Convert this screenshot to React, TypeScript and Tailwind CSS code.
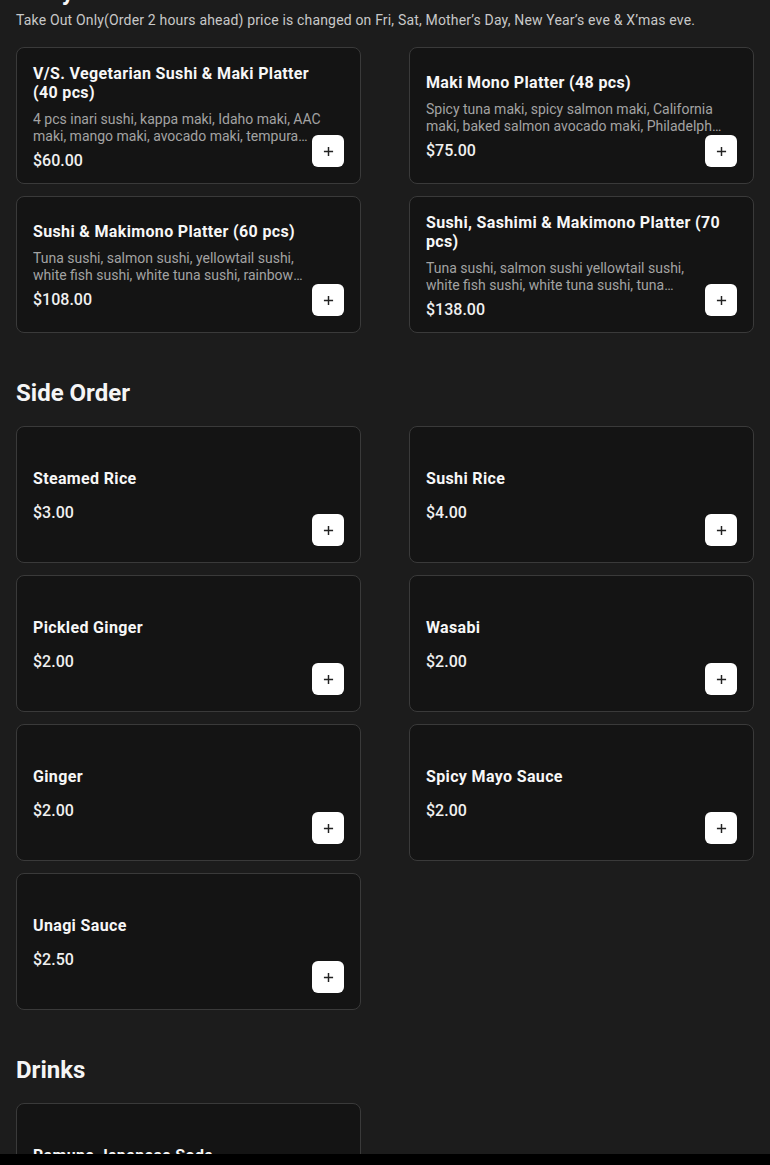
import React from "react";

type Item = { name: string; desc?: string; price: string; wide?: boolean };

const platters: Item[] = [
  {
    name: "V/S. Vegetarian Sushi & Maki Platter (40 pcs)",
    desc: "4 pcs inari sushi, kappa maki, Idaho maki, AAC maki, mango maki, avocado maki, tempura yam maki, oshinko maki",
    price: "$60.00",
  },
  {
    name: "Maki Mono Platter (48 pcs)",
    desc: "Spicy tuna maki, spicy salmon maki, California maki, baked salmon avocado maki, Philadelphia maki, dynamite maki",
    price: "$75.00",
    wide: true,
  },
  {
    name: "Sushi & Makimono Platter (60 pcs)",
    desc: "Tuna sushi, salmon sushi, yellowtail sushi, white fish sushi, white tuna sushi, rainbow maki, California maki",
    price: "$108.00",
  },
  {
    name: "Sushi, Sashimi & Makimono Platter (70 pcs)",
    desc: "Tuna sushi, salmon sushi yellowtail sushi, white fish sushi, white tuna sushi, tuna sashimi, salmon sashimi",
    price: "$138.00",
  },
];

const sides: Item[] = [
  { name: "Steamed Rice", price: "$3.00" },
  { name: "Sushi Rice", price: "$4.00" },
  { name: "Pickled Ginger", price: "$2.00" },
  { name: "Wasabi", price: "$2.00" },
  { name: "Ginger", price: "$2.00" },
  { name: "Spicy Mayo Sauce", price: "$2.00" },
  { name: "Unagi Sauce", price: "$2.50" },
];

const drinks: Item[] = [{ name: "Ramune Japanese Soda", price: "$3.50" }];

function Card({ item }: { item: Item }) {
  return (
    <div className="relative h-[137px] rounded-lg border border-[#3a3a3a] bg-[#141414] px-4 pt-[3px] flex items-center">
      <div className="w-[296px]">
        <div className="text-[16px] leading-[19px] font-bold text-[#f7f7f7] tracking-[0.35px]">
          {item.name}
        </div>
        <div
          className={
            (item.wide ? "w-[298px] " : "w-[292px] ") +
            "mt-[9px] text-[14px] leading-[17px] text-[#a3a3a3] line-clamp-2"
          }
        >
          {item.desc ?? ""}
        </div>
        <div className="mt-[6px] text-[16px] leading-[20px] font-medium text-[#f0f0f0]">
          {item.price}
        </div>
      </div>
      <button className="absolute bottom-4 right-4 w-8 h-8 rounded-md bg-white flex items-center justify-center">
        <svg width="11" height="11" viewBox="0 0 12 12" fill="none">
          <path d="M6 1v10M1 6h10" stroke="#222" strokeWidth="1.6" />
        </svg>
      </button>
    </div>
  );
}

function Grid({ items }: { items: Item[] }) {
  return (
    <div className="grid grid-cols-2 gap-x-12 gap-y-3">
      {items.map((it, i) => (
        <Card key={i} item={it} />
      ))}
    </div>
  );
}

export default function App() {
  return (
    <div
      className="min-h-[1165px] bg-[#1c1c1c] text-white px-4 overflow-hidden"
      style={{ fontFamily: "Roboto, 'Noto Sans', sans-serif" }}
    >
      <div className="-mt-[24px]">
        <h2 className="text-[24px] leading-[32px] font-bold text-[#f5f5f5]">Party Platter</h2>
        <p className="mt-[2px] text-[14px] leading-[20px] text-[#c8c8c8] tracking-[0.17px]">
          Take Out Only(Order 2 hours ahead) price is changed on Fri, Sat, Mother’s Day, New Year’s eve &amp; X’mas eve.
        </p>
        <div className="mt-[17px]">
          <Grid items={platters} />
        </div>
        <h2 className="mt-[44px] mb-[17px] text-[24px] leading-[32px] font-bold text-[#f5f5f5]">Side Order</h2>
        <Grid items={sides} />
        <h2 className="mt-[44px] mb-[17px] text-[24px] leading-[32px] font-bold text-[#f5f5f5]">Drinks</h2>
        <Grid items={drinks} />
      </div>
      <div className="fixed bottom-0 left-0 right-0 h-[11px] bg-black" />
    </div>
  );
}
